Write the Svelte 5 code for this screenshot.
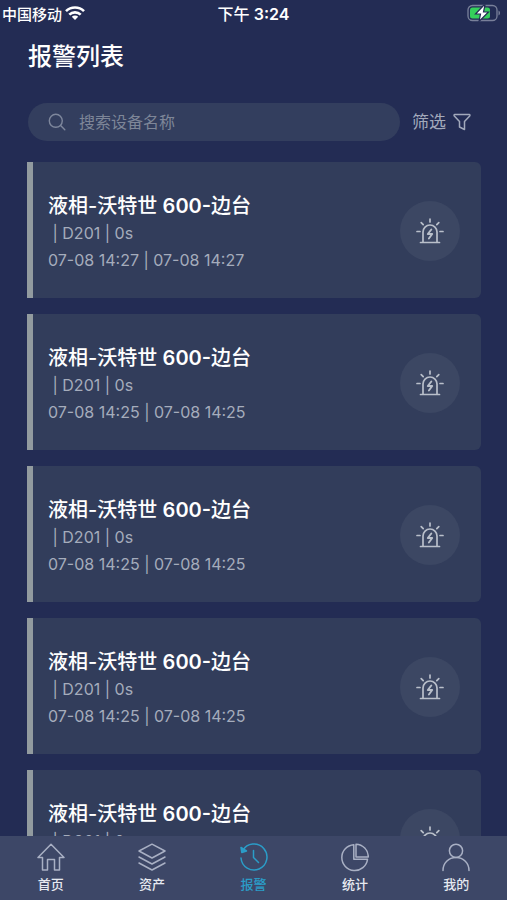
<script>
  const alarms = [
    { id: 1, line: '液相-沃特世', model: '600', site: '边台', code: 'D201', duration: '0s', start: '07-08 14:27', end: '07-08 14:27' },
    { id: 2, line: '液相-沃特世', model: '600', site: '边台', code: 'D201', duration: '0s', start: '07-08 14:25', end: '07-08 14:25' },
    { id: 3, line: '液相-沃特世', model: '600', site: '边台', code: 'D201', duration: '0s', start: '07-08 14:25', end: '07-08 14:25' },
    { id: 4, line: '液相-沃特世', model: '600', site: '边台', code: 'D201', duration: '0s', start: '07-08 14:25', end: '07-08 14:25' },
    { id: 5, line: '液相-沃特世', model: '600', site: '边台', code: 'D201', duration: '0s', start: '07-08 14:25', end: '07-08 14:25' }
  ];

  const tabs = [
    { id: 'home', label: '首页', paths: ['M14 1.2 1 14.500h4.500V27h5V16.500h7V27h5V14.500H27Z'] },
    { id: 'assets', label: '资产', paths: ['M14 1.200 27 8 14 15 1 8Z', 'M1 14l13 7 13-7', 'M1 20l13 7 13-7'] },
    { id: 'alarm', label: '报警', paths: ['M2.700 7.500A13 13 0 1 1 1 15', 'M13.500 7.500v7l5 5'], solid: 'M1 4.500 1.800 9.500 6.500 8Z' },
    { id: 'stats', label: '统计', paths: ['M12.800 1.700A12.900 12.900 0 1 0 26.500 16.300H12.800Z', 'M15 1.200V14h12.300A12.700 12.700 0 0 0 15 1.200Z'] },
    { id: 'me', label: '我的', paths: ['M14 1.200a6.600 6.600 0 1 1 0 13.200 6.600 6.600 0 0 1 0-13.200Z', 'M1 27.500c0-7.500 5.500-13 13-13s13 5.500 13 13'] }
  ];

  let active = $state('alarm');
  let query = $state('');
</script>

<div class="app">
  <div class="status">
    <div class="carrier">
      <span>中国移动</span>
      <svg width="20" height="14" viewBox="0 0 20 14" aria-hidden="true">
        <g fill="none" stroke="#fff" stroke-width="2.600">
          <path d="M1 5.200a12.800 12.800 0 0 1 18 0" />
          <path d="M4.300 8.700a8.100 8.100 0 0 1 11.400 0" />
        </g>
        <path d="M10 14 6.800 10.800a4.500 4.500 0 0 1 6.400 0Z" fill="#fff" />
      </svg>
    </div>
    <time>下午 <b>3:24</b></time>
    <div class="battery">
      <svg width="34" height="18" viewBox="0 0 34 18" role="img" aria-label="电池充电中">
        <rect x="1" y="1.500" width="29" height="15" rx="4.500" fill="none" stroke="#79809a" stroke-width="1.300" />
        <path d="M31.500 6.500c2 .8 2 4.200 0 5Z" fill="#79809a" />
        <rect x="3" y="3.500" width="20" height="11" rx="2.500" fill="#35cf5b" />
        <path d="M17 1 8.500 10h5l-1.500 7.500 9.500-9.500h-5l1.500-7Z" fill="#fff" stroke="#232c54" stroke-width="1.200" />
      </svg>
    </div>
  </div>

  <header>
    <h1>报警列表</h1>
    <div class="tools">
      <label class="search">
        <svg width="18" height="18" viewBox="0 0 18 18" fill="none" stroke="#7e879c" stroke-width="1.400" stroke-linecap="round" aria-hidden="true">
          <circle cx="7.800" cy="7.800" r="6.500" />
          <path d="m12.600 12.600 4.200 4.200" />
        </svg>
        <input type="search" bind:value={query} placeholder="搜索设备名称" aria-label="搜索设备名称" />
      </label>
      <button class="filter" type="button">
        <span>筛选</span>
        <svg width="18" height="18" viewBox="0 0 18 18" fill="none" stroke="#a2a9bb" stroke-width="1.500" stroke-linejoin="round" aria-hidden="true">
          <path d="M1.800 1.500h14.400c.8 0 1 .8.500 1.400L11.500 8.500V16.500L6.500 14V8.500L1.300 2.900C.8 2.300 1 1.500 1.800 1.500Z" />
        </svg>
      </button>
    </div>
  </header>

  <main>
    {#each alarms as alarm (alarm.id)}
      <article class="card">
        <div class="info">
          <h2>{alarm.line} <b>{alarm.model}-</b>{alarm.site}</h2>
          <p>&nbsp;| {alarm.code} | {alarm.duration}</p>
          <p>{alarm.start} | {alarm.end}</p>
        </div>
        <div class="badge">
          <svg width="28" height="26" viewBox="0 0 28 26" fill="none" stroke="#b9bfca" stroke-width="1.700" stroke-linecap="round" aria-hidden="true">
            <path d="M4.500 24.500h19M7 24V14a7 7 0 0 1 14 0v10" />
            <path d="M14 1v3M5.200 4.700l2 2M22.800 4.700l-2 2M1 13.500h3M24 13.500h3" />
            <path d="M15.300 11.500 11.800 16h4.400L12.900 20.500" stroke-width="1.900" stroke-linejoin="round" />
          </svg>
        </div>
      </article>
    {/each}
  </main>

  <nav>
    {#each tabs as tab (tab.id)}
      <button type="button" class:active={active === tab.id} onclick={() => (active = tab.id)}>
        <svg width="28" height="29" viewBox="0 0 28 29" fill="none" stroke="currentColor" stroke-width="1.500" stroke-linejoin="round" stroke-linecap="round" aria-hidden="true">
          {#each tab.paths as d}
            <path {d} />
          {/each}
          {#if tab.solid}
            <path d={tab.solid} fill="currentColor" />
          {/if}
        </svg>
        <span>{tab.label}</span>
      </button>
    {/each}
  </nav>
</div>

<style>
  :global(body) {
    margin: 0;
    background: #232c54;
  }

  .app {
    display: flex;
    flex-direction: column;
    height: 100vh;
    overflow: hidden;
    background: #232c54;
    color: #fff;
    font-family: Inter, 'Noto Sans CJK SC', sans-serif;
  }

  button,
  input {
    font-family: inherit;
    border: 0;
    padding: 0;
    background: none;
  }

  b {
    font-weight: 600;
  }

  .status {
    display: grid;
    grid-template-columns: 1fr auto 1fr;
    align-items: center;
    height: 26px;
    padding: 0 2px;
    font-weight: 500;
  }

  .carrier {
    display: flex;
    align-items: center;
    gap: 3px;
    font-size: 15px;
  }

  time {
    font-size: 16px;
  }

  .battery {
    display: flex;
    justify-content: flex-end;
    padding-right: 4px;
  }

  header {
    flex: none;
    padding: 13px 36px 21px 28px;
  }

  h1 {
    margin: 0;
    font-size: 24px;
    line-height: 36px;
    font-weight: 500;
  }

  .tools {
    display: flex;
    align-items: center;
    gap: 12px;
    margin-top: 28px;
  }

  .search {
    flex: 1;
    min-width: 0;
    display: flex;
    align-items: center;
    gap: 13px;
    height: 38px;
    padding: 0 20px;
    border-radius: 19px;
    box-sizing: border-box;
    background: #333e5e;
  }

  .search svg {
    flex: none;
  }

  input {
    flex: 1;
    min-width: 0;
    outline: none;
    color: #fff;
    font-size: 16px;
    line-height: 24px;
  }

  input::placeholder {
    color: #7e8698;
    opacity: 1;
  }

  .filter {
    display: flex;
    align-items: center;
    gap: 7px;
    color: #a2a9bb;
    font-size: 17px;
    line-height: 24px;
  }

  main {
    flex: 1;
    min-height: 0;
    display: flex;
    flex-direction: column;
    gap: 16px;
    padding: 0 26px 16px 27px;
    overflow-y: auto;
    scrollbar-width: none;
  }

  .card {
    flex: none;
    display: flex;
    align-items: center;
    justify-content: space-between;
    padding: 26px 21px 24px 15px;
    border-left: 6px solid #929b9f;
    border-radius: 0 6px 6px 0;
    background: #323d5b;
  }

  .info {
    padding-top: 4px;
  }

  h2 {
    margin: 0;
    font-size: 20px;
    line-height: 28px;
    font-weight: 500;
  }

  p {
    margin: 0;
    color: #a5acbc;
    font-size: 16px;
    line-height: 27px;
  }

  .badge {
    flex: none;
    display: flex;
    align-items: center;
    justify-content: center;
    width: 60px;
    height: 60px;
    border-radius: 50%;
    background: #3c4763;
  }

  nav {
    flex: none;
    display: flex;
    height: 64px;
    background: #3d4767;
  }

  nav button {
    flex: 1;
    display: flex;
    flex-direction: column;
    align-items: center;
    padding-top: 7px;
    color: #a9b0c4;
  }

  nav span {
    color: #e6e9f0;
    font-size: 13px;
    line-height: 24px;
    font-weight: 500;
  }

  nav .active,
  nav .active span {
    color: #2b9dc8;
  }
</style>
